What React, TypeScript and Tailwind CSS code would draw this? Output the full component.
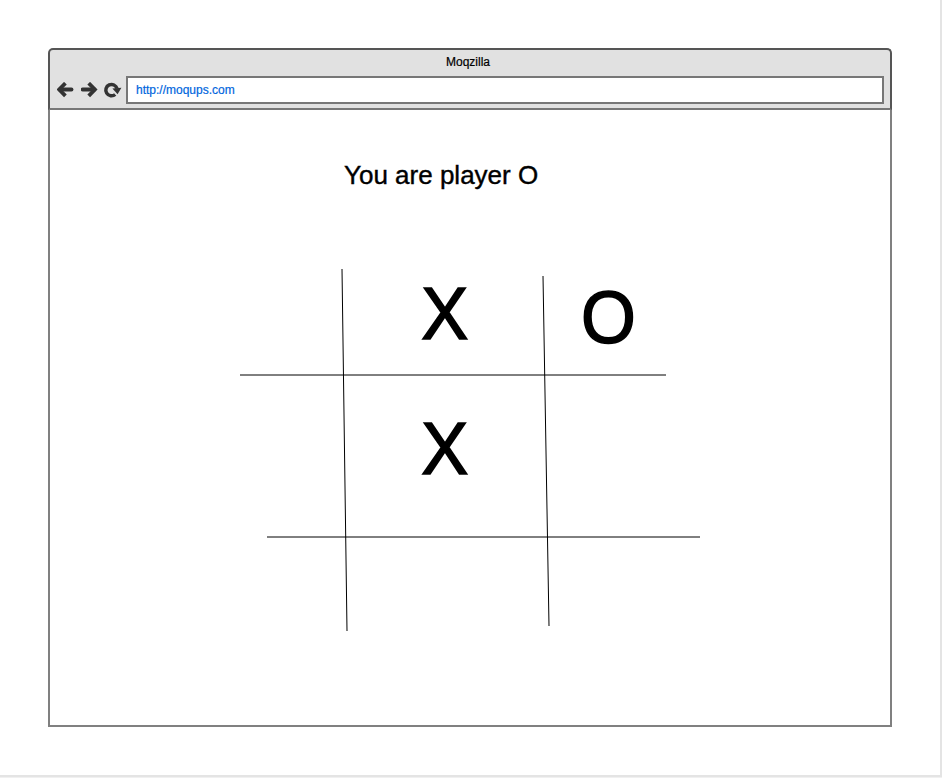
import React from "react";

const font = "font-['Liberation_Sans',Arial,sans-serif]";

function BackIcon() {
  return (
    <svg width="17" height="16" viewBox="0 0 17 16" fill="none" stroke="#333" strokeWidth="3.8">
      <path d="M8.4 1.2 2.2 7.5l6.2 6.3" />
      <path d="M2.8 7.5h11.7" strokeLinecap="round" />
    </svg>
  );
}

function ForwardIcon() {
  return (
    <svg width="17" height="16" viewBox="0 0 17 16" fill="none" stroke="#333" strokeWidth="3.8">
      <path d="M7.7 1.2 13.9 7.5l-6.2 6.3" />
      <path d="M13.3 7.5H1.6" strokeLinecap="round" />
    </svg>
  );
}

function ReloadIcon() {
  return (
    <svg width="17" height="16" viewBox="0 0 17 16" className="overflow-visible">
      <path d="M10.2 12.5A5.7 5.7 0 1 1 12 6.6" fill="none" stroke="#333" strokeWidth="3.5" />
      <path d="M7.4 6.4 16.4 5.8 12.6 12.2Z" fill="#333" />
    </svg>
  );
}

function Mark({ x, y, children }: { x: number; y: number; children: string }) {
  return (
    <text
      transform={`translate(${x} ${y}) scale(0.94 1)`}
      textAnchor="middle"
      className={`${font} text-[75px]`}
      fill="#000"
      stroke="#000"
      strokeWidth="1.6"
    >
      {children}
    </text>
  );
}

function Board() {
  return (
    <svg width="480" height="380" viewBox="230 260 480 380" className="ml-[180px] block">
      <g stroke="#000" strokeWidth="1">
        <path d="M240 375H666" />
        <path d="M267 537H700" />
        <path d="M342 269 347 631" />
        <path d="M543 276 549 626" />
      </g>
      <Mark x={444.7} y={338.5}>X</Mark>
      <Mark x={608.5} y={342.7}>O</Mark>
      <Mark x={444.7} y={473.5}>X</Mark>
    </svg>
  );
}

export default function App() {
  return (
    <div className={`h-[778px] w-[942px] bg-[#f0f0f0] ${font} text-black`}>
      <div className="h-[777px] w-[942px] border-r-2 border-b-2 border-[#e4e4e4] bg-white pt-12 pl-12">
        <div className="flex h-[679px] w-[844px] flex-col">
          <header className="h-[62px] shrink-0 rounded-t-[5px] border-2 border-[#555] border-b-[#777] bg-[#e1e1e1]">
            <div className="flex h-[26px] items-center justify-center pr-1 pb-[2px] text-[12px] leading-none [-webkit-text-stroke:0.2px_#000]">
              Moqzilla
            </div>
            <div className="flex h-7 items-center pl-[7px]">
              <div className="flex gap-[7px]">
                <BackIcon />
                <ForwardIcon />
                <ReloadIcon />
              </div>
              <div className="ml-[4px] flex h-7 w-[758px] items-center border-2 border-[#777] bg-white pl-2 text-[12px] leading-none text-[#0066dd] [-webkit-text-stroke:0.2px_#0066dd]">
                http://moqups.com
              </div>
            </div>
          </header>
          <main className="flex-1 border-x-2 border-b-2 border-[#808080]">
            <h1 className="mt-[50px] ml-[294px] h-[100px] text-[26px] leading-[30px] whitespace-nowrap [-webkit-text-stroke:0.4px_#000]">
              You are player O
            </h1>
            <Board />
          </main>
        </div>
      </div>
    </div>
  );
}
